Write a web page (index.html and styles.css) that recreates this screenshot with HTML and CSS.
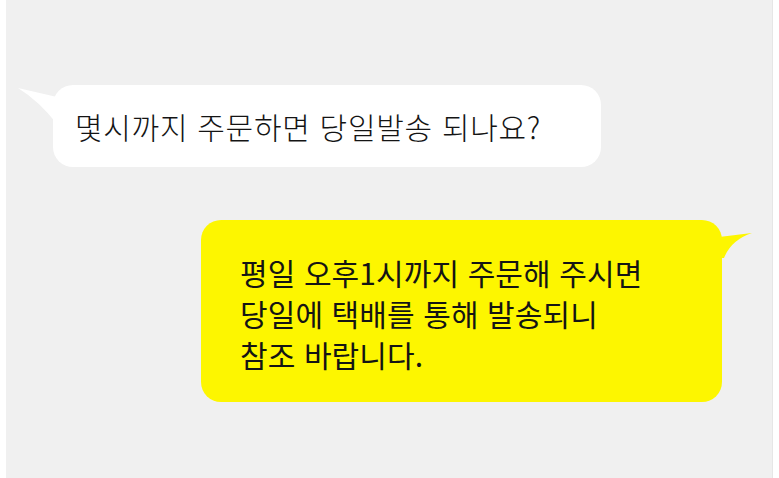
FILE: index.html
```html
<!DOCTYPE html>
<html lang="ko">
<head>
    <meta charset="UTF-8">
    <meta name="viewport" content="width=device-width, initial-scale=1.0">
    <title>당일발송 안내</title>
    <link rel="stylesheet" href="styles.css">
</head>
<body>
    <div class="chat">
        <div class="bubble question">
            <p>몇시까지 주문하면 당일발송 되나요?</p>
        </div>
        <div class="bubble answer">
            <p>평일 오후1시까지 주문해 주시면<br>당일에 택배를 통해 발송되니<br>참조 바랍니다.</p>
        </div>
    </div>
</body>
</html>
```

FILE: styles.css
```css
body {
    margin: 0;
    background: #fff;
    font-family: "Noto Sans CJK KR", "Noto Sans", sans-serif;
    color: #141414;
}
.chat {
    margin: 0 6px;
    height: 478px;
    background: #f0f0f0;
    border-right: 1px solid #e6e6e6;
    display: flex;
    flex-direction: column;
    align-items: flex-start;
}
.bubble {
    position: relative;
    border-radius: 20px;
    box-sizing: border-box;
}
.bubble p {
    margin: 0;
    font-size: 30px;
}
.question {
    margin: 85px 0 0 47px;
    width: 548px;
    height: 82px;
    padding-left: 22px;
    background: #fff;
    display: flex;
    align-items: center;
}
.question p {
    line-height: 40px;
    font-weight: 300;
    letter-spacing: 0.7px;
}
.question::before {
    content: "";
    position: absolute;
    left: -36px;
    top: 0;
    width: 40px;
    height: 40px;
    background: #fff;
    clip-path: path('M1 3 L40 12 L40 39 Q22 16 1 3 Z');
}
.answer {
    margin: 53px 0 0 195px;
    width: 521px;
    height: 182px;
    padding: 32px 0 0 39px;
    background: #fdf600;
}
.answer p {
    line-height: 41px;
    letter-spacing: 0.1px;
}
.answer::after {
    content: "";
    position: absolute;
    right: -33px;
    top: 10px;
    width: 36px;
    height: 30px;
    background: #fdf600;
    clip-path: path('M0 7 L33 3 Q12 10 5 28 L0 28 Z');
}
```
